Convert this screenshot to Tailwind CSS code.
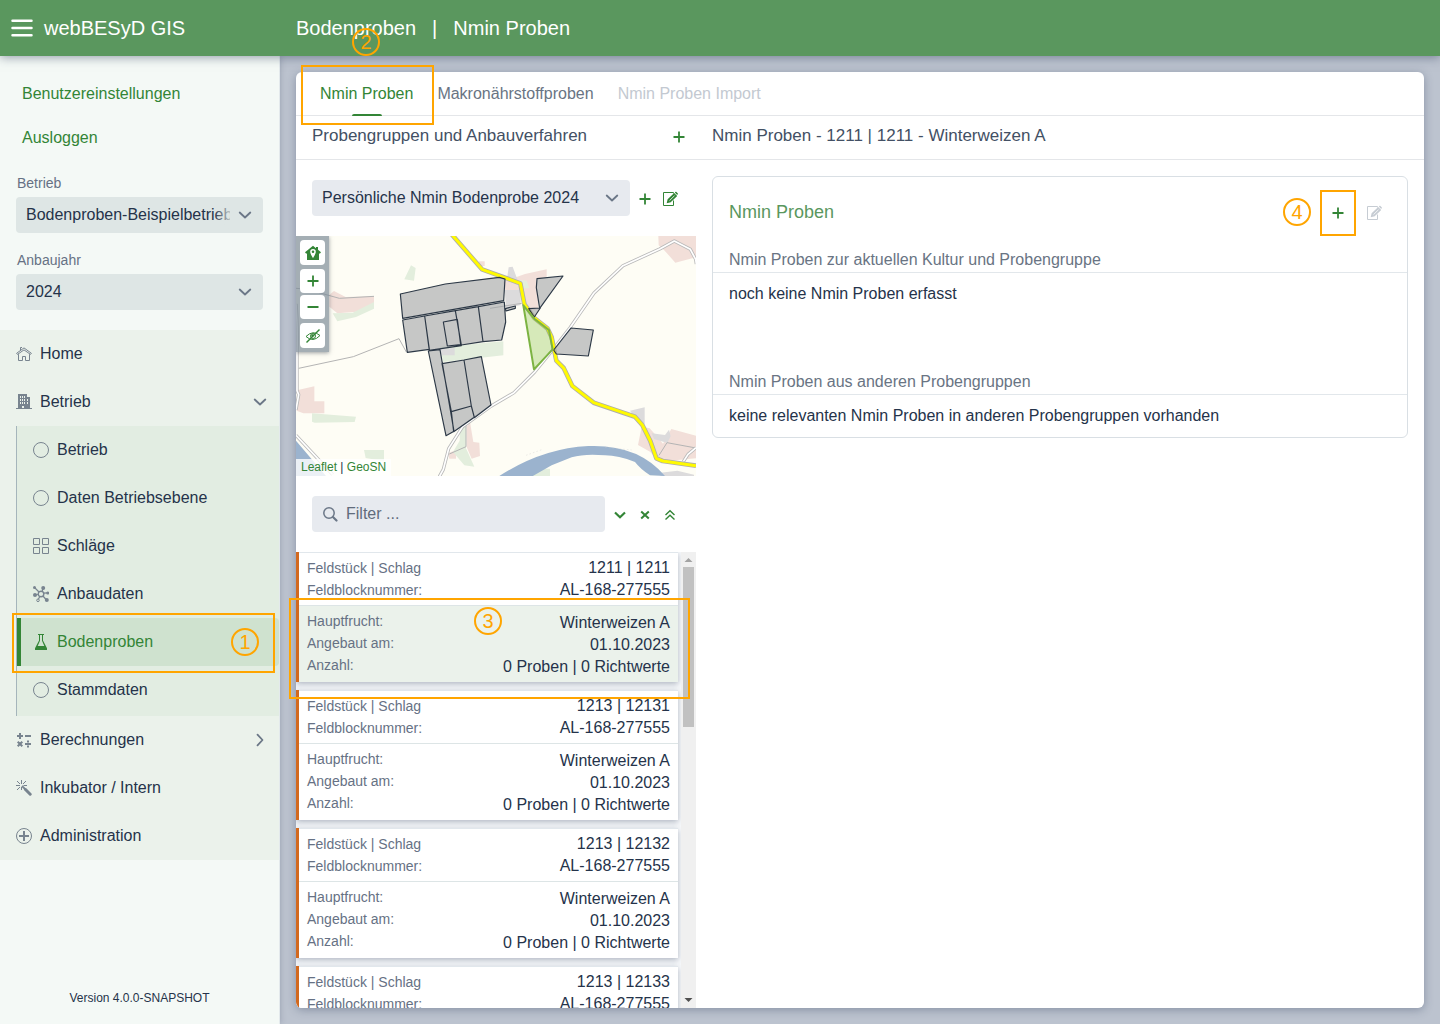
<!DOCTYPE html>
<html lang="de">
<head>
  <meta charset="UTF-8">
  <meta name="viewport" content="width=device-width, initial-scale=1.0">
  <title>webBESyD GIS | Bodenproben</title>
  <script src="https://cdn.jsdelivr.net/npm/@tailwindcss/browser@4"></script>
</head>
<body class="relative h-screen flex flex-col overflow-hidden bg-[#bcc3cf] font-['Liberation_Sans',sans-serif] text-base text-[#25334a]">

  <!-- Icon sprite -->
  <svg class="hidden" aria-hidden="true">
    <symbol id="i-home" viewBox="0 0 16 16">
      <path fill="none" stroke="currentColor" d="M2.5 8.2v6.3h4v-4h3v4h4V8.2M.6 7.3 8 1.9l7.4 5.4-.9 1.1L8 3.900 1.5 8.400zM4.500 4V1.500H6"/>
    </symbol>
    <symbol id="i-building" viewBox="0 0 16 16">
      <path fill="currentColor" fill-rule="evenodd" d="M2 0h9v3h3v11h2v1H0v-1h2zM4 2v2h1V2zM6 2v2h1V2zM8 2v2h1V2zM4 5v2h1V5zM6 5v2h1V5zM8 5v2h1V5zM4 8v2h1V8zM6 8v2h1V8zM8 8v2h1V8zM11 5v2h1V5zM11 8v2h1V8zM6 12v2h2v-2z"/>
    </symbol>
    <symbol id="i-circle" viewBox="0 0 16 16"><circle cx="8" cy="8" r="7.500" fill="none" stroke="currentColor"/></symbol>
    <symbol id="i-grid" viewBox="0 0 16 16"><path fill="none" stroke="currentColor" d="M.5.5h6v6h-6zM9.500.5h6v6h-6zM.5 9.500h6v6h-6zM9.500 9.500h6v6h-6z"/></symbol>
    <symbol id="i-cluster" viewBox="0 0 16 16">
      <g fill="none" stroke="currentColor"><circle cx="8" cy="8" r="2.800" stroke-width="1.400"/><circle cx="5" cy="14.300" r="1.300"/><path stroke-width="1.200" d="M2 2l4 4M9.200 5.500 10 2M10.500 7.200 15 6.800M5.200 8.500 2 9M6.800 10.500 5.500 13M10 10l3 3.500"/></g>
      <g fill="currentColor"><circle cx="1.500" cy="1.500" r="1.500"/><circle cx="10.200" cy="2" r="2"/><circle cx="14.700" cy="7" r="1.500"/><circle cx="2" cy="9" r="2"/><circle cx="13.800" cy="14" r="2"/></g>
    </symbol>
    <symbol id="i-flask" viewBox="0 0 16 16">
      <path fill="currentColor" fill-rule="evenodd" d="M5 0h6v1h-1v5.500l4 7.800V16H2v-1.700l4-7.800V1H5zM7 1v5.800L4.700 12h6.600L9 6.800V1z"/>
    </symbol>
    <symbol id="i-calc" viewBox="0 0 16 16">
      <path fill="none" stroke="currentColor" stroke-width="2" d="M1 4h6M4 1v6M9 4h6M9 12h6M1.700 9.700l4.600 4.600M6.300 9.700l-4.600 4.600M12 8.500v2M12 13.500v2"/>
    </symbol>
    <symbol id="i-magic" viewBox="0 0 16 16">
      <path fill="none" stroke="currentColor" d="M5.500 0v4M0 5.500h4M1 1l3 3M10 1 7 4M1 10l3-3M5.500 7v3M7.500 5.500H11"/>
      <path stroke="currentColor" stroke-width="3" stroke-linecap="round" d="M9.500 9.500l4.700 4.700"/><path stroke="currentColor" stroke-width="1.800" d="M6 6l4 4"/>
    </symbol>
    <symbol id="i-plus-circle" viewBox="0 0 16 16">
      <circle cx="8" cy="8" r="7.500" fill="none" stroke="currentColor"/><path stroke="currentColor" stroke-width="2" d="M3 8h10M8 3v10"/>
    </symbol>
    <symbol id="i-down" viewBox="0 0 16 16"><path fill="none" stroke="currentColor" stroke-width="1.800" stroke-linecap="round" stroke-linejoin="round" d="M2.700 5.500 8 10.500l5.300-5"/></symbol>
    <symbol id="i-right" viewBox="0 0 16 16"><path fill="none" stroke="currentColor" stroke-width="1.800" stroke-linecap="round" stroke-linejoin="round" d="M5.500 2.700 10.500 8l-5 5.300"/></symbol>
    <symbol id="i-plus" viewBox="0 0 16 16"><path fill="none" stroke="currentColor" stroke-width="1.800" d="M2.500 8h11M8 2.500v11"/></symbol>
    <symbol id="i-edit" viewBox="0 0 16 16">
      <path fill="none" stroke="currentColor" d="M11.500 9.500v5h-10v-13h10v1"/>
      <path fill="currentColor" d="M4.700 12.300l.9-4 6.600-6.200 3 3-6.500 6.200zM12.800 1.600l.6-.6c.3-.3.700-.3 1 0l1.300 1.300c.3.300.3.700 0 1l-.5.600z"/>
      <path stroke="#fff" stroke-width=".8" d="M7.500 9.600l5-4.900"/>
    </symbol>
  </svg>

  <!-- Header -->
  <header class="relative z-20 h-14 shrink-0 flex items-center bg-[#5a975e] text-white text-xl shadow-[0_1px_10px_rgba(40,55,85,0.5)]">
    <div class="w-[296px] shrink-0 flex items-center gap-[11px] pl-[11px]">
      <button type="button" aria-label="Menü" class="flex">
        <svg class="w-[22px] h-[18px]" viewBox="0 0 22 18"><path stroke="#fff" stroke-width="2.500" stroke-linecap="round" d="M1.500 1.700h19M1.500 9h19M1.500 16.300h19"/></svg>
      </button>
      <span>webBESyD GIS</span>
    </div>
    <h1 class="flex gap-4"><span>Bodenproben</span><span>|</span><span>Nmin Proben</span></h1>
  </header>

  <div class="flex-1 min-h-0 flex">

    <!-- Sidebar -->
    <aside class="relative z-10 w-[280px] shrink-0 flex flex-col bg-[#f4f9f6] border-r border-[#e3e9ec] shadow-[0_0_6px_rgba(40,55,85,0.25)]">
      <div class="flex flex-col items-start pt-4 pl-[22px] text-[#338536]">
        <a href="#" class="h-11 leading-11">Benutzereinstellungen</a>
        <a href="#" class="h-11 leading-11">Ausloggen</a>
      </div>
      <div class="px-4 pt-3">
        <label for="betrieb" class="block pl-px text-sm leading-[22px] text-[#667184]">Betrieb</label>
        <div class="relative mt-[3px]">
          <select id="betrieb" class="block w-full h-9 pl-2.5 pr-[33px] appearance-none rounded-sm bg-[#dee6e5]"><option>Bodenproben-Beispielbetrieb</option></select>
          <span class="absolute right-[33px] top-1 h-7 w-4 bg-linear-to-r from-[#dee6e5]/0 to-[#dee6e5]/80 pointer-events-none"></span>
          <svg class="absolute right-2.5 top-2.5 size-4 text-[#6b7787] pointer-events-none"><use href="#i-down"/></svg>
        </div>
        <label for="jahr" class="block mt-4 pl-px text-sm leading-[22px] text-[#667184]">Anbaujahr</label>
        <div class="relative mt-[3px]">
          <select id="jahr" class="block w-full h-9 pl-2.5 pr-[33px] appearance-none rounded-sm bg-[#dee6e5]"><option>2024</option></select>
          <svg class="absolute right-2.5 top-2.5 size-4 text-[#6b7787] pointer-events-none"><use href="#i-down"/></svg>
        </div>
      </div>

      <nav class="mt-5 bg-[#ebf2eb]">
        <a href="#" class="h-12 px-4 flex items-center gap-2"><svg class="size-4 text-[#78848f]"><use href="#i-home"/></svg>Home</a>
        <a href="#" class="h-12 pl-4 pr-[11px] flex items-center gap-2"><svg class="size-4 text-[#78848f]"><use href="#i-building"/></svg>Betrieb<svg class="ml-auto size-4 text-[#6b7787]"><use href="#i-down"/></svg></a>
        <ul class="ml-4 pb-0.5 border-l border-[#a5b5bb] bg-[#e2ede2]">
          <li><a href="#" class="h-12 px-4 flex items-center gap-2"><svg class="size-4 text-[#78848f]"><use href="#i-circle"/></svg>Betrieb</a></li>
          <li><a href="#" class="h-12 px-4 flex items-center gap-2"><svg class="size-4 text-[#78848f]"><use href="#i-circle"/></svg>Daten Betriebsebene</a></li>
          <li><a href="#" class="h-12 px-4 flex items-center gap-2"><svg class="size-4 text-[#78848f]"><use href="#i-grid"/></svg>Schläge</a></li>
          <li><a href="#" class="h-12 px-4 flex items-center gap-2"><svg class="size-4 text-[#78848f]"><use href="#i-cluster"/></svg>Anbaudaten</a></li>
          <li><a href="#" aria-current="page" class="h-12 pl-3 flex items-center gap-2 border-l-4 border-[#338536] rounded-r-sm bg-[#cfe2cf] text-[#338536]"><svg class="size-4"><use href="#i-flask"/></svg>Bodenproben</a></li>
          <li><a href="#" class="h-12 px-4 flex items-center gap-2"><svg class="size-4 text-[#78848f]"><use href="#i-circle"/></svg>Stammdaten</a></li>
        </ul>
        <a href="#" class="h-12 pl-4 pr-[11px] flex items-center gap-2"><svg class="size-4 text-[#78848f]"><use href="#i-calc"/></svg>Berechnungen<svg class="ml-auto size-4 text-[#6b7787]"><use href="#i-right"/></svg></a>
        <a href="#" class="h-12 px-4 flex items-center gap-2"><svg class="size-4 text-[#78848f]"><use href="#i-magic"/></svg>Inkubator / Intern</a>
        <a href="#" class="h-12 px-4 flex items-center gap-2"><svg class="size-4 text-[#78848f]"><use href="#i-plus-circle"/></svg>Administration</a>
      </nav>
      <p class="mt-auto pb-[18px] text-center text-xs">Version 4.0.0-SNAPSHOT</p>
    </aside>

    <!-- Content -->
    <main class="flex-1 min-w-0 p-4">
      <div class="h-full flex flex-col overflow-hidden rounded-md bg-white shadow-[0_2px_10px_rgba(40,55,85,0.35)]">

        <div role="tablist" class="h-11 shrink-0 flex gap-6 px-6 border-b border-[#e4e6e9]">
          <button type="button" role="tab" aria-selected="true" class="relative h-11 pb-px text-[#338536]">Nmin Proben<span class="absolute bottom-0 left-8 w-[30px] h-0.5 rounded-t-sm bg-[#338536]"></span></button>
          <button type="button" role="tab" class="h-11 pb-px text-[#697483]">Makronährstoffproben</button>
          <button type="button" role="tab" disabled class="h-11 pb-px text-[#c3c9d1]">Nmin Proben Import</button>
        </div>

        <div class="h-11 shrink-0 flex border-b border-[#e4e6e9] text-[17px] leading-10 text-[#435064]">
          <div class="w-[400px] pl-4 pr-[9px] flex justify-between">
            <h2>Probengruppen und Anbauverfahren</h2>
            <button type="button" aria-label="Probengruppe anlegen" class="flex mt-[13px] text-[#338536]"><svg class="size-4"><use href="#i-plus"/></svg></button>
          </div>
          <h2 class="pl-4">Nmin Proben - 1211 | 1211 - Winterweizen A</h2>
        </div>

        <div class="flex-1 min-h-0 flex">

          <!-- Left column -->
          <section class="w-[400px] shrink-0 flex flex-col">
            <div class="flex items-center px-4 py-5">
              <div class="relative flex-1">
                <select aria-label="Probengruppe" class="block w-full h-9 pl-2.5 pr-8 appearance-none rounded-sm bg-[#e7eaef]"><option>Persönliche Nmin Bodenprobe 2024</option></select>
                <svg class="absolute right-2.5 top-2.5 size-4 text-[#6b7787] pointer-events-none"><use href="#i-down"/></svg>
              </div>
              <div class="ml-[7px] mr-0.5 flex gap-[9px] text-[#338536]">
                <button type="button" aria-label="Neu" class="pt-0.5"><svg class="size-4"><use href="#i-plus"/></svg></button>
                <button type="button" aria-label="Bearbeiten" class="pt-0.5"><svg class="size-4"><use href="#i-edit"/></svg></button>
              </div>
            </div>

            <!-- Map -->
            <div class="relative shrink-0 h-60 overflow-hidden bg-[#fefdf5]">
              <svg class="block w-full h-full" viewBox="18 18 1200 720" preserveAspectRatio="xMidYMid slice">
                <!-- land use -->
                <g fill="#f2dfd9">
                  <path d="M118 195l14-12 35 18 85-2v22l-50 24-60 5-24-20zM24 480l49-11v45h30v36H40l-20-8zM530 590l10-14 10 60 18 2 2 40-25 8-15-35zM474 670l24-10v26h-20zM566 94h18v14h-18z"/>
                  <path d="M640 155l65-23 65-14v22l-32 8 8 90-35 6-10-60-58-5zM1105 18h113v64l-62 16-32-36-18-16zM1055 590l24 5 16 18 24 28 25-44 74 20v68l-110 10-28-30-36-20z"/>
                </g>
                <g fill="#e3eedd">
                  <path d="M343 148l20-42 14 8-5 38zM128 250l60-2 64-32v20l-54 25-56 13zM450 350l190-16v42l-180 20zM66 550l132 10-4 16-120 2-8-3zM222 660h60v34l-55-10zM510 590l18-10v75l25 55-30-4-34-40 20-34zM600 340h32l6 30-38 8zM690 150l20 2 8 22-26 2zM720 738l20-22h40v22z"/>
                </g>
                <g fill="#dcdbdc">
                  <path d="M450 357l44-3v22h-38zM644 180h48v45l-44 10zM656 112l12-2 14 38-30-8zM1020 542l44-10v50l-30-20zM1085 610l40 5 12-16 5 20-10 20-40-12zM1112 728l50-6 50 12v6h-100z"/>
                </g>
                <!-- water -->
                <path fill="#9bb3ce" d="M625 740q130-85 270-92 150-6 230 90l-45-2q-30-20-45-40-50-20-90-20-60-6-100 6l-60 24-60 34zM18 632l90 106H18z"/>
                <path fill="none" stroke="#c9c9c9" stroke-dasharray="5 6" d="M708 676l50-18M945 652l80 8"/>
                <!-- paths and minor roads -->
                <g fill="none" stroke="#b4b4b4" stroke-width="3">
                  <path d="M18 175l30 2 100 28 104-6M26 415l164-35 137-54 22 40M478 672l50-22v-65M600 235l95-15M1107 676l24-38 87 16"/>
                </g>
                <path fill="none" stroke="#b9b9b9" stroke-width="10" stroke-linejoin="round" d="M448 740l12-22 16-62 42-66 86-62 68-40 62-62 54-66 52-67 72-104 87-82 110-50 44-24 48 25 16 30 2 14M18 222q5 60 3 150v110l5 12-8 45M18 616l110 118M1180 695l14-22 24-20"/>
                <path fill="none" stroke="#fff" stroke-width="5" stroke-linejoin="round" d="M448 740l12-22 16-62 42-66 86-62 68-40 62-62 54-66 52-67 72-104 87-82 110-50 44-24 48 25 16 30 2 14M18 222q5 60 3 150v110l5 12-8 45M18 616l110 118M1180 695l14-22 24-20"/>
                <!-- main road -->
                <g fill="none" stroke-linejoin="round">
                  <path stroke="#adadad" stroke-width="14" d="M486 14l90 104 115 42 12 62 30 42 40 32 12 26 14 70 22 22 26 54 64 50 124 42 22 25 24 48 18 52 19 8 100 14"/>
                  <path stroke="#fffa00" stroke-width="9" d="M486 14l90 104 115 42 12 62 30 42 40 32 12 26 14 70 22 22 26 54 64 50 124 42 22 25 24 48 18 52 19 8 100 14"/>
                </g>
                <!-- fields -->
                <g fill="#a3a7a9" fill-opacity=".62" stroke="#2c3846" stroke-width="3.500" stroke-linejoin="round">
                  <path d="M331 192l135-30 162-20 17 5-4 65-303 53zM338 270l66-12 14 100-66 9zM404 258l92-16 18 105-96 14zM460 276l42-8 10 76-40 4zM496 242l69-12 14 105-65 10zM565 230l78-14 4 60-12 54-56 5z"/>
                  <path d="M415 363l35-4 42 245-24 13zM456 401l66-11 22 138-60 17zM522 390l52-10 29 145-50 38-9-35zM484 545l60-17 9 34-62 43zM646 236l30-8v7l-28 8z"/>
                  <path d="M741 146l78-8-70 97-10-62zM716 236l35-2-18 27zM843 294l67 6-15 78-96-6-8-12z"/>
                </g>
                <path fill="#8bc34a" fill-opacity=".35" stroke="#7cb342" stroke-width="6" stroke-linejoin="round" d="M700 226l33 40 44 34 11 58-56 60z"/>
              </svg>

              <div class="absolute left-0 top-0 w-[33px] h-29 p-1 bg-[#7e8b98]/70 shadow-[0_1px_4px_rgba(60,70,80,0.5)] flex flex-col text-[#338536]">
                <button type="button" aria-label="Startansicht" class="size-[25px] flex items-center justify-center rounded-sm bg-white">
                  <svg class="size-4" viewBox="0 0 16 16"><path fill="currentColor" fill-rule="evenodd" d="M8 .8 11 3.200V2h2v2.800l3 2.500-1.200 1.500L14 8.200V15H2V8.200l-.8.600L0 7.300zM8 4a2.800 2.800 0 0 0-2.800 2.800C5.200 9 8 13 8 13s2.800-4 2.800-6.200A2.800 2.800 0 0 0 8 4zM8 5.500a1.300 1.300 0 1 1 0 2.600 1.300 1.300 0 0 1 0-2.600z"/></svg>
                </button>
                <button type="button" aria-label="Vergrößern" class="mt-1 h-6 w-[25px] flex items-center justify-center rounded-sm bg-white"><svg class="size-4"><use href="#i-plus"/></svg></button>
                <button type="button" aria-label="Verkleinern" class="mt-0.5 h-6 w-[25px] flex items-center justify-center rounded-sm bg-white">
                  <svg class="size-4" viewBox="0 0 16 16"><path stroke="currentColor" stroke-width="2" d="M2.500 8h11"/></svg>
                </button>
                <button type="button" aria-label="Ebenen ausblenden" class="mt-1 size-[25px] flex items-center justify-center rounded-sm bg-white">
                  <svg class="size-4" viewBox="0 0 16 16"><g fill="none" stroke="currentColor"><path d="M1 8.500Q8 1.500 15 7.500 8 15 1 8.500z"/><circle cx="8" cy="8" r="2.500"/><path d="M1.500 14.500l13-13" stroke-width="1.400"/></g><circle cx="7.500" cy="7.500" r="1.200" fill="currentColor"/></svg>
                </button>
              </div>
              <div class="absolute left-0 bottom-0 px-[5px] bg-white/80 text-xs leading-[17px]"><a href="#" class="text-[#338536]">Leaflet</a> | <a href="#" class="text-[#338536]">GeoSN</a></div>
            </div>

            <div class="flex items-center px-4 py-5">
              <label class="flex-1 h-9 flex items-center gap-2 px-2.5 rounded-sm bg-[#e7eaef] text-[#6b7787]">
                <svg class="size-4 shrink-0" viewBox="0 0 16 16"><circle cx="7" cy="7" r="5.200" fill="none" stroke="currentColor" stroke-width="1.500"/><path stroke="currentColor" stroke-width="2.200" stroke-linecap="round" d="M11.200 11.200l3.300 3.300"/></svg>
                <input type="text" aria-label="Filter" placeholder="Filter ..." class="w-full min-w-0 bg-transparent outline-none placeholder:text-[#616c7c]">
              </label>
              <div class="ml-[7px] mr-0.5 flex gap-[9px] text-[#338536]">
                <button type="button" aria-label="Aufklappen" class="pt-0.5"><svg class="size-4" viewBox="0 0 16 16"><path fill="none" stroke="currentColor" stroke-width="2.200" d="M3 5.500l5 4.700 5-4.700"/></svg></button>
                <button type="button" aria-label="Leeren" class="pt-0.5"><svg class="size-4" viewBox="0 0 16 16"><path fill="none" stroke="currentColor" stroke-width="2" d="M4.200 4.500l7.600 7M11.800 4.500l-7.600 7"/></svg></button>
                <button type="button" aria-label="Zuklappen" class="pt-0.5"><svg class="size-4" viewBox="0 0 16 16"><path fill="none" stroke="currentColor" stroke-width="1.400" d="M3.500 8 8 3.800 12.500 8M3.500 12.500 8 8.300l4.500 4.200"/></svg></button>
              </div>
            </div>

            <!-- Plot list -->
            <div class="flex-1 min-h-0 flex">
              <div id="plots" class="flex-1 overflow-hidden flex flex-col gap-2 pr-[3px] bg-[#f7f9fb]"></div>
              <div aria-hidden="true" class="w-[15px] shrink-0 flex flex-col items-center bg-[#f0f0f0]">
                <svg class="w-[15px] h-[15px] shrink-0" viewBox="0 0 15 15"><path fill="#a3a3a3" d="M3.500 10h8l-4-4z"/></svg>
                <span class="w-[11px] h-40 bg-[#c1c1c1]"></span>
                <svg class="mt-auto w-[15px] h-[15px] shrink-0" viewBox="0 0 15 15"><path fill="#505050" d="M3.500 5h8l-4 4z"/></svg>
              </div>
            </div>
          </section>

          <!-- Right column -->
          <section class="flex-1 min-w-0 p-4">
            <div class="rounded-md border border-[#d9dfe4]">
              <div class="h-[69px] px-4 flex items-center justify-between">
                <h2 class="text-lg text-[#5a975e]">Nmin Proben</h2>
                <div class="flex gap-5 mr-[9px]">
                  <button type="button" aria-label="Nmin Probe anlegen" class="pt-0.5 text-[#338536]"><svg class="size-4"><use href="#i-plus"/></svg></button>
                  <button type="button" aria-label="Nmin Probe bearbeiten" disabled class="pt-0.5 text-[#c6ccd3]"><svg class="size-4"><use href="#i-edit"/></svg></button>
                </div>
              </div>
              <h3 class="px-4 pt-0.5 leading-6 border-b border-[#e2e7eb] text-[#697483]">Nmin Proben zur aktuellen Kultur und Probengruppe</h3>
              <p class="px-4 leading-[42px]">noch keine Nmin Proben erfasst</p>
              <h3 class="mt-[53px] px-4 pt-0.5 leading-6 border-b border-[#e2e7eb] text-[#697483]">Nmin Proben aus anderen Probengruppen</h3>
              <p class="px-4 leading-[42px]">keine relevanten Nmin Proben in anderen Probengruppen vorhanden</p>
            </div>
          </section>
        </div>
      </div>
    </main>
  </div>

  <!-- Numbered hints above the page -->
  <div class="absolute inset-0 z-30 pointer-events-none text-xl text-[#ffa500]">
    <span class="absolute left-3 top-[613px] w-[263px] h-15 border-2 border-[#ffa500]"></span>
    <span class="absolute left-[231px] top-[628px] size-7 flex items-center justify-center rounded-full border-2 border-[#ffa500]">1</span>
    <span class="absolute left-[301px] top-[65px] w-[133px] h-15 border-2 border-[#ffa500]"></span>
    <span class="absolute left-88 top-7 size-7 flex items-center justify-center rounded-full border-2 border-[#ffa500]">2</span>
    <span class="absolute left-[289px] top-[598px] w-[401px] h-[101px] border-2 border-[#ffa500]"></span>
    <span class="absolute left-[474px] top-[607px] size-7 flex items-center justify-center rounded-full border-2 border-[#ffa500]">3</span>
    <span class="absolute right-21 top-[190px] w-9 h-[46px] border-2 border-[#ffa500]"></span>
    <span class="absolute right-[129px] top-[198px] size-7 flex items-center justify-center rounded-full border-2 border-[#ffa500]">4</span>
  </div>

  <script>
    const plots = ['1211 | 1211', '1213 | 12131', '1213 | 12132', '1213 | 12133'];
    document.getElementById('plots').innerHTML = plots.map((plot, i) => `
      <article class="shrink-0 border-l-3 border-[#d2691e] bg-white leading-[22px] shadow-[0_2px_6px_rgba(40,55,85,0.35)]">
        <dl class="h-[53px] px-2 pt-1 border-t border-[#e1e7ec]">
          <div class="flex justify-between"><dt class="text-sm leading-[22px] text-[#667184]">Feldstück | Schlag</dt><dd>${plot}</dd></div>
          <div class="flex justify-between"><dt class="text-sm leading-[22px] text-[#667184]">Feldblocknummer:</dt><dd>AL-168-277555</dd></div>
        </dl>
        <dl class="h-[77px] px-2 pt-1.5 border-t border-[#dde5e6] ${i === 0 ? 'bg-[#ebf2eb]' : 'bg-white'}">
          <div class="flex justify-between"><dt class="text-sm leading-[18px] text-[#667184]">Hauptfrucht:</dt><dd>Winterweizen A</dd></div>
          <div class="flex justify-between"><dt class="text-sm leading-[18px] text-[#667184]">Angebaut am:</dt><dd>01.10.2023</dd></div>
          <div class="flex justify-between"><dt class="text-sm leading-[18px] text-[#667184]">Anzahl:</dt><dd>0 Proben | 0 Richtwerte</dd></div>
        </dl>
      </article>`).join('');
  </script>
</body>
</html>
